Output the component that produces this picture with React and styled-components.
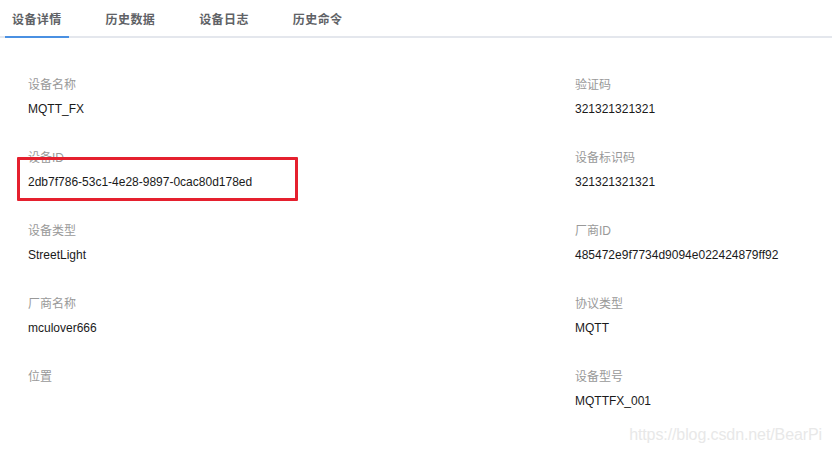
import React from 'react';
import styled, { createGlobalStyle } from 'styled-components';

const GlobalStyle = createGlobalStyle`
  html, body {
    margin: 0;
    padding: 0;
    background: #ffffff;
  }
  body {
    font-family: "Liberation Sans", "Noto Sans CJK SC", Arial, sans-serif;
    width: 832px;
    height: 454px;
    overflow: hidden;
  }
`;

const Page = styled.div`
  position: relative;
  width: 832px;
  height: 454px;
`;

const TabBar = styled.div`
  display: flex;
  gap: 30px;
  padding-left: 5px;
  height: 36px;
  border-bottom: 2px solid #e4e7ed;
  box-sizing: content-box;
`;

const Tab = styled.div`
  display: flex;
  align-items: center;
  padding: 0 7px;
  margin-bottom: -2px;
  font-size: 12px;
  font-weight: bold;
  color: #606266;
  letter-spacing: 0.4px;
  border-bottom: 2px solid ${(p) => (p.$active ? '#4a90e2' : 'transparent')};
  cursor: pointer;
`;

const Details = styled.div`
  display: grid;
  grid-template-columns: 547px 1fr;
  padding: 39px 0 0 28px;
`;

const Column = styled.div`
  display: flex;
  flex-direction: column;
`;

const Field = styled.div`
  position: relative;
  display: flex;
  flex-direction: column;
  gap: 8px;
  height: 73px;
`;

const Label = styled.div`
  font-size: 12px;
  line-height: 16px;
  color: #999999;
`;

const Value = styled.div`
  font-size: 12px;
  line-height: 16px;
  min-height: 16px;
  color: #1a1a1a;
`;

const Highlight = styled.div`
  position: absolute;
  left: -11px;
  top: 7px;
  width: 275px;
  height: 38px;
  border: 3px solid #e5202e;
  border-radius: 1px;
  pointer-events: none;
`;

const Watermark = styled.div`
  position: absolute;
  right: 10px;
  bottom: 10px;
  font-size: 16px;
  letter-spacing: -0.1px;
  color: #e8e8e8;
  pointer-events: none;
`;

const tabs = ['设备详情', '历史数据', '设备日志', '历史命令'];

const left = [
  { label: '设备名称', value: 'MQTT_FX' },
  { label: '设备ID', value: '2db7f786-53c1-4e28-9897-0cac80d178ed', marked: true },
  { label: '设备类型', value: 'StreetLight' },
  { label: '厂商名称', value: 'mculover666' },
  { label: '位置', value: '' },
];

const right = [
  { label: '验证码', value: '321321321321' },
  { label: '设备标识码', value: '321321321321' },
  { label: '厂商ID', value: '485472e9f7734d9094e022424879ff92' },
  { label: '协议类型', value: 'MQTT' },
  { label: '设备型号', value: 'MQTTFX_001' },
];

const renderFields = (list) =>
  list.map((f) => (
    <Field key={f.label}>
      <Label>{f.label}</Label>
      <Value>{f.value}</Value>
      {f.marked && <Highlight />}
    </Field>
  ));

const App = () => {
  return (
    <Page>
      <GlobalStyle />
      <TabBar>
        {tabs.map((t, i) => (
          <Tab key={t} $active={i === 0}>
            {t}
          </Tab>
        ))}
      </TabBar>
      <Details>
        <Column>{renderFields(left)}</Column>
        <Column>{renderFields(right)}</Column>
      </Details>
      <Watermark>https://blog.csdn.net/BearPi</Watermark>
    </Page>
  );
};

export default App;
